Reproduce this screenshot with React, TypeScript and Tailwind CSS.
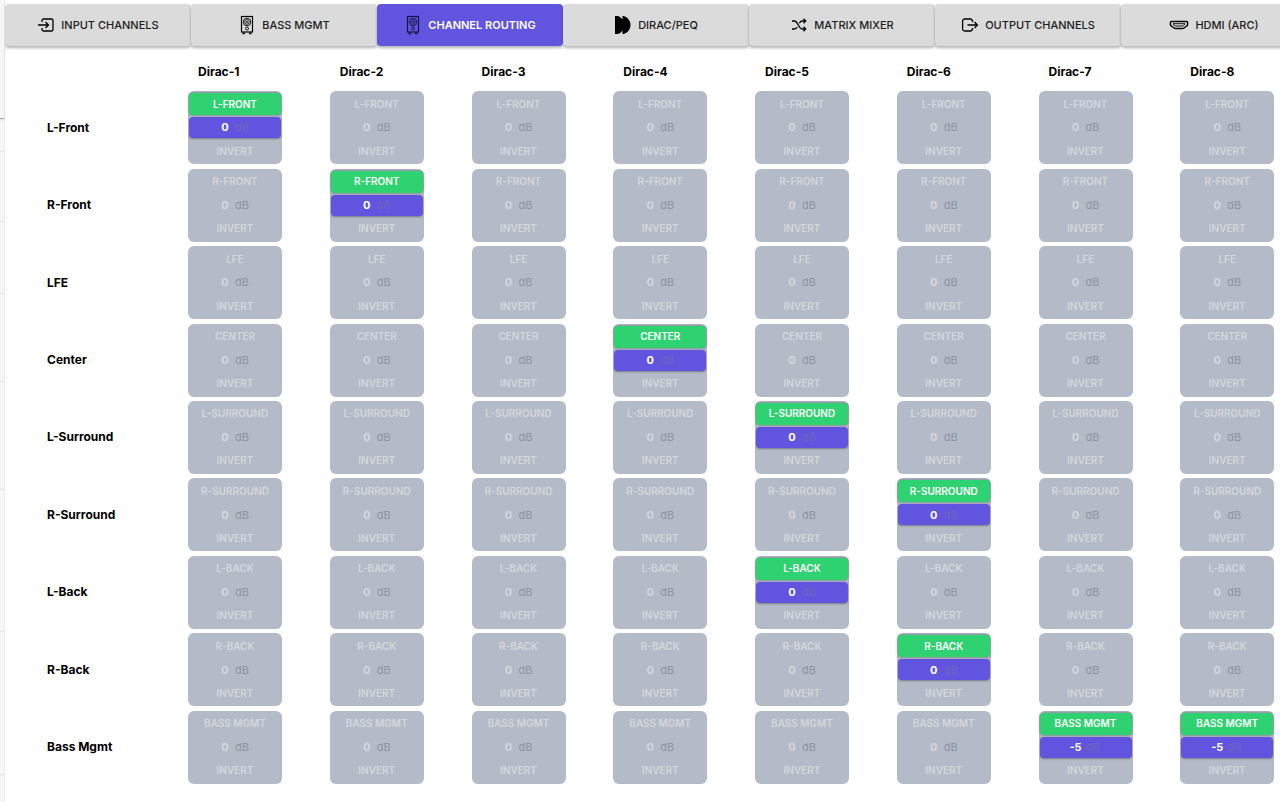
import React, { useState } from 'react';

type CellState = {
    active: boolean;
    gain: string;
};

interface TabProps {
    label: string;
    icon: React.ReactNode;
    isActive: boolean;
    onSelect: () => void;
}

interface RouteCellProps {
    input: string;
    output: string;
    cell: CellState;
    onToggle: () => void;
    onGainChange: (gain: string) => void;
}

const inputs = ['L-Front', 'R-Front', 'LFE', 'Center', 'L-Surround', 'R-Surround', 'L-Back', 'R-Back', 'Bass Mgmt'];
const outputs = ['Dirac-1', 'Dirac-2', 'Dirac-3', 'Dirac-4', 'Dirac-5', 'Dirac-6', 'Dirac-7', 'Dirac-8'];

const initialRoutes: Record<string, string> = {
    'L-Front/Dirac-1': '0',
    'R-Front/Dirac-2': '0',
    'Center/Dirac-4': '0',
    'L-Surround/Dirac-5': '0',
    'R-Surround/Dirac-6': '0',
    'L-Back/Dirac-5': '0',
    'R-Back/Dirac-6': '0',
    'Bass Mgmt/Dirac-7': '-5',
    'Bass Mgmt/Dirac-8': '-5',
};

const InputIcon = () => (
    <svg viewBox="0 0 18 18" className="size-[18px]" fill="none" stroke="currentColor" strokeWidth="1.3" aria-hidden="true">
        <path d="M5 6V4.6A1.6 1.6 0 0 1 6.6 3H14.4A1.6 1.6 0 0 1 16 4.6V13.4A1.6 1.6 0 0 1 14.4 15H6.6A1.6 1.6 0 0 1 5 13.4V12" />
        <path d="M1 9H11.5M8.5 6L11.5 9L8.5 12" />
    </svg>
);

const OutputIcon = () => (
    <svg viewBox="0 0 18 18" className="size-[18px]" fill="none" stroke="currentColor" strokeWidth="1.3" aria-hidden="true">
        <path d="M11.5 6V4.6L9.9 3H3.6A2 2 0 0 0 1.6 5V13A2 2 0 0 0 3.6 15H9.9L11.5 13.4V12" />
        <path d="M6.5 9H16.5M13.5 6L16.5 9L13.5 12" />
    </svg>
);

const SpeakerIcon = () => (
    <svg viewBox="0 0 18 20" className="h-5 w-[18px]" fill="none" stroke="currentColor" aria-hidden="true">
        <rect x="3.5" y="1.5" width="11" height="15.5" strokeWidth="1.2" />
        <circle cx="9" cy="7" r="3.8" strokeWidth="0.9" />
        <circle cx="9" cy="7" r="2.3" strokeWidth="0.8" />
        <circle cx="9" cy="7" r="0.7" strokeWidth="0.7" />
        <circle cx="9" cy="13.5" r="1.5" strokeWidth="0.9" />
        <path d="M4.5 18.3H7M11 18.3H13.5" strokeWidth="1.8" />
    </svg>
);

const DiracIcon = () => (
    <svg viewBox="0 0 18 20" className="h-5 w-[18px]" fill="currentColor" aria-hidden="true">
        <path d="M1 1H3.5C6 1.5 7.5 3 8.5 4.5V1H9.5C13.5 2 16.5 5.5 16.5 10C16.5 14.5 13.5 18 9.5 19H8.5V15.5C7.5 17 6 18.5 3.5 19H1Z" />
    </svg>
);

const ShuffleIcon = () => (
    <svg viewBox="0 0 18 18" className="size-[18px]" fill="none" stroke="currentColor" strokeWidth="1.3" aria-hidden="true">
        <path d="M2 5H4.5C7.8 5 8.8 13 12 13H15.5M2 13H4.5C5.7 13 6.5 12.2 7.2 11M9.3 7.2C10 5.9 10.9 5 12 5H15.5" />
        <path d="M13.5 2.8L15.7 5L13.5 7.2M13.5 10.8L15.7 13L13.5 15.2" />
    </svg>
);

const HdmiIcon = () => (
    <svg viewBox="0 0 20 18" className="h-[18px] w-5" fill="none" stroke="currentColor" strokeWidth="1.4" aria-hidden="true">
        <path d="M2.3 5.5H17.7A0.9 0.9 0 0 1 18.6 6.4V8.8C18.6 9.5 18 10.1 17 10.5L15 12C14.5 12.4 14 12.5 13.3 12.5H6.7C6 12.5 5.5 12.4 5 12L3 10.5C2 10.1 1.4 9.5 1.4 8.8V6.4A0.9 0.9 0 0 1 2.3 5.5Z" />
        <path d="M4 7.7V8.3L6.3 10H13.7L16 8.3V7.7Z" strokeWidth="0.9" />
    </svg>
);

const tabs = [
    { label: 'INPUT CHANNELS', icon: <InputIcon /> },
    { label: 'BASS MGMT', icon: <SpeakerIcon /> },
    { label: 'CHANNEL ROUTING', icon: <SpeakerIcon /> },
    { label: 'DIRAC/PEQ', icon: <DiracIcon /> },
    { label: 'MATRIX MIXER', icon: <ShuffleIcon /> },
    { label: 'OUTPUT CHANNELS', icon: <OutputIcon /> },
    { label: 'HDMI (ARC)', icon: <HdmiIcon /> },
];

const Tab: React.FC<TabProps> = ({ label, icon, isActive, onSelect }) => (
    <button
        onClick={onSelect}
        className={`flex h-[42px] w-[186px] shrink-0 items-center justify-center gap-1.5 rounded text-[11px] shadow-[0_2px_3px_rgba(0,0,0,0.3)] ${
            isActive ? 'bg-[#6155df] font-semibold' : 'bg-[#dbdbdb] font-medium'
        }`}
    >
        <span className={isActive ? 'text-[#17133f]' : 'text-black'}>{icon}</span>
        <span className={isActive ? 'text-white' : 'text-[#1c1c1c]'}>{label}</span>
    </button>
);

const RouteCell: React.FC<RouteCellProps> = ({ input, output, cell, onToggle, onGainChange }) => {
    const [inverted, setInverted] = useState(false);

    return (
        <div className="flex h-[73px] w-[94px] flex-col gap-0.5 rounded-md bg-[#b4bbc8] px-px py-0.5 text-[10px] font-semibold text-[#d5d7da]">
            <button
                onClick={onToggle}
                className={`h-[22px] rounded uppercase ${
                    cell.active ? 'bg-[#2fd271] text-white shadow-[0_0_3px_rgba(0,0,0,0.45)]' : ''
                }`}
            >
                {input}
            </button>
            <label
                className={`flex h-[21px] items-center rounded text-[11px] ${
                    cell.active ? 'bg-[#6155df] text-white shadow-[0_1px_2px_rgba(0,0,0,0.35)]' : ''
                }`}
            >
                <input
                    type="text"
                    value={cell.gain}
                    disabled={!cell.active}
                    onChange={e => onGainChange(e.target.value)}
                    aria-label={`${input} to ${output} gain`}
                    className="ml-[26px] w-5 bg-transparent text-center font-bold outline-none"
                />
                <span className={`font-normal ${cell.active ? 'text-[#6f64bd]' : 'text-[#8e949f]'}`}>dB</span>
            </label>
            <button
                onClick={() => setInverted(!inverted)}
                className={`h-[22px] rounded ${inverted ? 'bg-[#6155df] text-white' : ''}`}
            >
                INVERT
            </button>
        </div>
    );
};

const App: React.FC = () => {
    const [activeTab, setActiveTab] = useState('CHANNEL ROUTING');
    const [cells, setCells] = useState<Record<string, CellState>>(() =>
        Object.fromEntries(
            inputs.flatMap(input =>
                outputs.map(output => {
                    const key = `${input}/${output}`;
                    return [key, { active: key in initialRoutes, gain: initialRoutes[key] ?? '0' }];
                })
            )
        )
    );

    const updateCell = (key: string, changes: Partial<CellState>) => {
        setCells(prev => ({ ...prev, [key]: { ...prev[key], ...changes } }));
    };

    return (
        <div className="flex min-h-screen overflow-hidden bg-white font-['Inter',sans-serif]">
            {/* Edge of the side drawer */}
            <aside className="flex w-[5px] shrink-0 flex-col border-r border-[#ececec] bg-[#f6f6f6]">
                <div className="h-[119px] border-b border-[#a8a8a8] shadow-sm" />
                <div className="h-[33px] border-b border-[#e4e4e4]" />
                <div className="h-[70px] border-b border-[#e4e4e4]" />
                <div className="h-[72px] border-b border-[#e4e4e4]" />
                <div className="h-[88px] border-b border-[#e4e4e4]" />
                <div className="h-[108px] border-b border-[#e4e4e4]" />
                <div className="h-[142px] border-b border-[#e4e4e4]" />
                <div className="h-[143px] border-b border-[#e4e4e4]" />
            </aside>

            <main className="min-w-0 flex-1 overflow-hidden">
                <nav className="flex pt-1">
                    {tabs.map(tab => (
                        <Tab
                            key={tab.label}
                            label={tab.label}
                            icon={tab.icon}
                            isActive={activeTab === tab.label}
                            onSelect={() => setActiveTab(tab.label)}
                        />
                    ))}
                </nav>

                {/* Routing matrix */}
                <table className="ml-[42px] h-[calc(100vh-62px)] w-full table-fixed">
                    <thead>
                        <tr className="h-[43px]">
                            <td className="w-[141px]" />
                            {outputs.map(output => (
                                <th key={output} scope="col" className="pt-2 pl-2.5 text-left text-xs font-bold">
                                    {output}
                                </th>
                            ))}
                        </tr>
                    </thead>
                    <tbody>
                        {inputs.map(input => (
                            <tr key={input}>
                                <th scope="row" className="text-left text-xs font-bold">{input}</th>
                                {outputs.map(output => {
                                    const key = `${input}/${output}`;
                                    return (
                                        <td key={output} className="py-0.5">
                                            <RouteCell
                                                input={input}
                                                output={output}
                                                cell={cells[key]}
                                                onToggle={() => updateCell(key, { active: !cells[key].active })}
                                                onGainChange={gain => updateCell(key, { gain })}
                                            />
                                        </td>
                                    );
                                })}
                            </tr>
                        ))}
                    </tbody>
                </table>
            </main>
        </div>
    );
};

export default App;
